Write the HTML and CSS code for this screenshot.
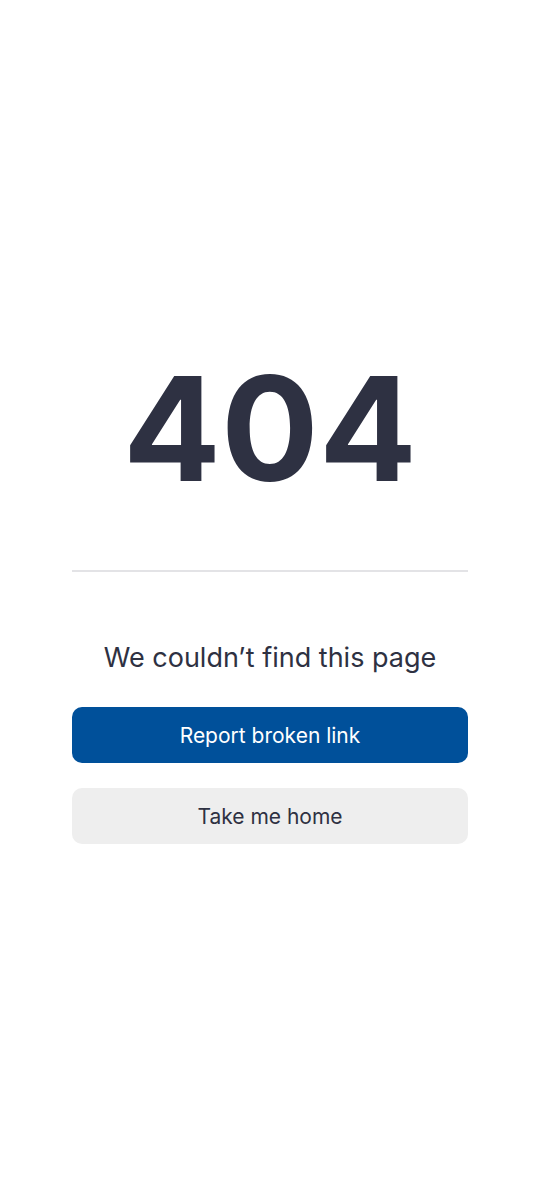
FILE: index.html
```html
<!DOCTYPE html>
<html lang="en">
<head>
<meta charset="utf-8">
<title>404</title>
<link rel="stylesheet" href="styles.css">
</head>
<body>
<main class="page">
  <h1 class="code">404</h1>
  <hr class="divider">
  <h2 class="message">We couldn’t find this page</h2>
  <div class="actions">
    <button class="btn btn-primary">Report broken link</button>
    <button class="btn btn-secondary">Take me home</button>
  </div>
</main>
</body>
</html>
```
FILE: styles.css
```css
html, body {
  margin: 0;
  padding: 0;
  background: #ffffff;
}
body {
  font-family: Inter, "Noto Sans", sans-serif;
  color: #2e3142;
}
.page {
  width: 540px;
  height: 1200px;
  box-sizing: border-box;
  padding: 0 72px;
  display: flex;
  flex-direction: column;
  justify-content: center;
}
.code {
  margin: 0;
  text-align: center;
  font-size: 145px;
  font-weight: 700;
  line-height: 145px;
  letter-spacing: 0;
  color: #2e3142;
}
.divider {
  border: 0;
  height: 2px;
  background: #e3e3e6;
  margin: 69px 0 0;
}
.message {
  margin: 70px 0 0;
  text-align: center;
  font-size: 27px;
  font-weight: 400;
  line-height: 32px;
  color: #2e3142;
}
.actions {
  margin-top: 33px;
  display: flex;
  flex-direction: column;
  gap: 25px;
}
.btn {
  height: 56px;
  border: 0;
  border-radius: 10px;
  font-family: Inter, "Noto Sans", sans-serif;
  font-size: 21px;
  cursor: pointer;
}
.btn-primary {
  background: #00509a;
  color: #ffffff;
}
.btn-secondary {
  background: #eeeeee;
  color: #2e3142;
}
```
